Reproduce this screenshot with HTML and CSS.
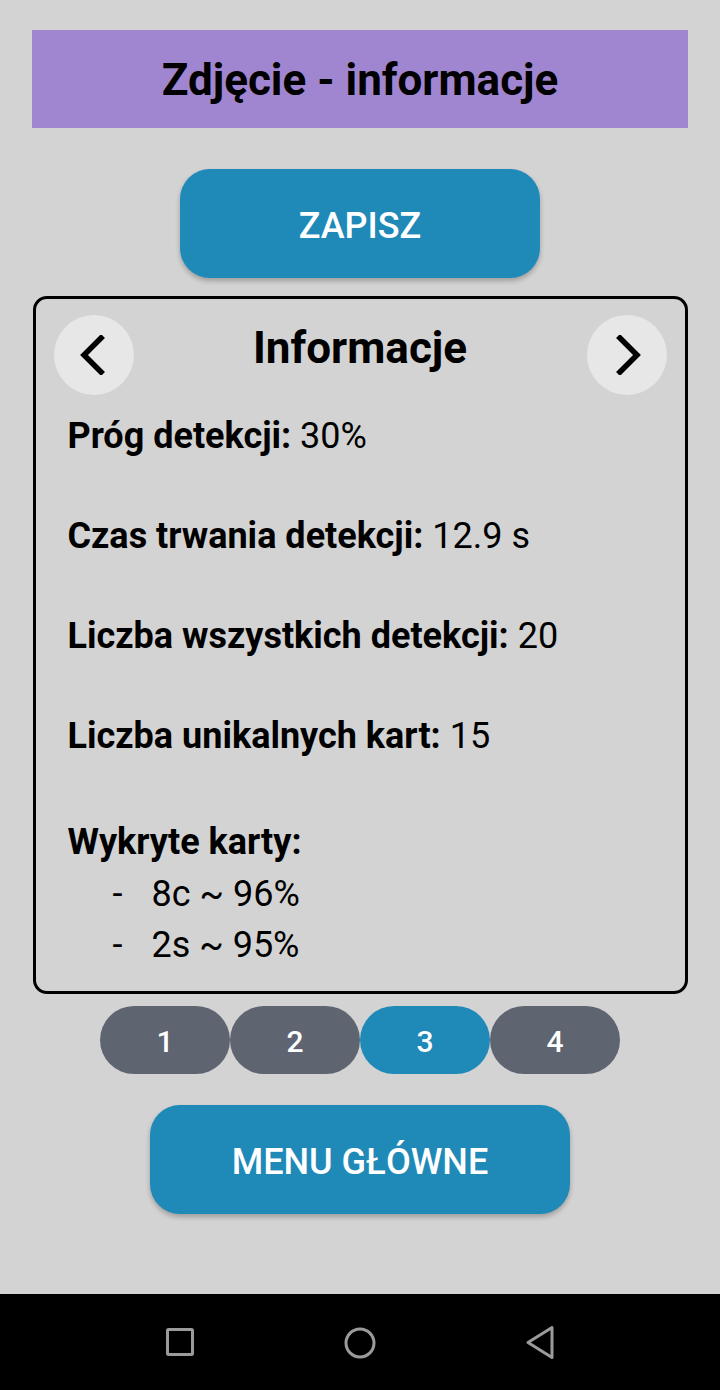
FILE: index.html
```html
<!DOCTYPE html>
<html lang="pl">
<head>
<meta charset="utf-8">
<title>Zdjęcie - informacje</title>
<link rel="stylesheet" href="styles.css">
</head>
<body>
<div class="screen">
  <main class="content">
    <header class="topbar"><h1 class="topbar-title">Zdjęcie - informacje</h1></header>
    <button class="btn btn-save">ZAPISZ</button>
    <section class="card">
      <div class="card-head">
        <button class="nav-circle" aria-label="Poprzedni">
          <svg width="40" height="40" viewBox="0 0 40 40"><path d="M29 1 L10 20 L29 39" fill="none" stroke="#000" stroke-width="5.5" stroke-linejoin="miter"/></svg>
        </button>
        <h2 class="card-title">Informacje</h2>
        <button class="nav-circle" aria-label="Następny">
          <svg width="40" height="40" viewBox="0 0 40 40"><path d="M11 1 L30 20 L11 39" fill="none" stroke="#000" stroke-width="5.5" stroke-linejoin="miter"/></svg>
        </button>
      </div>
      <div class="rows">
        <p class="row"><b>Próg detekcji:</b> 30%</p>
        <p class="row"><b>Czas trwania detekcji:</b> 12.9 s</p>
        <p class="row"><b>Liczba wszystkich detekcji:</b> 20</p>
        <p class="row"><b>Liczba unikalnych kart:</b> 15</p>
        <p class="row row-cards"><b>Wykryte karty:</b></p>
        <ul class="cards">
          <li class="card-item"><span class="dash">-</span><span>8c ~ 96%</span></li>
          <li class="card-item"><span class="dash">-</span><span>2s ~ 95%</span></li>
        </ul>
      </div>
    </section>
    <nav class="pager">
      <button class="pill">1</button>
      <button class="pill">2</button>
      <button class="pill pill-active">3</button>
      <button class="pill">4</button>
    </nav>
    <button class="btn btn-menu">MENU GŁÓWNE</button>
  </main>
  <footer class="sysbar">
    <svg class="sys-icon" width="40" height="40" viewBox="0 0 40 40"><rect x="7.5" y="7.5" width="25" height="25" rx="1" fill="none" stroke="#9b9b9b" stroke-width="3"/></svg>
    <svg class="sys-icon" width="40" height="40" viewBox="0 0 40 40"><circle cx="20" cy="21" r="14" fill="none" stroke="#9b9b9b" stroke-width="3"/></svg>
    <svg class="sys-icon" width="40" height="40" viewBox="0 0 40 40"><path d="M32 5.5 L32 35.5 L8 20.5 Z" fill="none" stroke="#9b9b9b" stroke-width="3" stroke-linejoin="round"/></svg>
  </footer>
</div>
</body>
</html>
```

FILE: styles.css
```css
* { box-sizing: border-box; }
html, body { margin: 0; padding: 0; }
body {
  background: #d3d3d3;
  font-family: Roboto, "Liberation Sans", sans-serif;
  color: #000;
}
.screen {
  height: 1390px;
  display: flex;
  flex-direction: column;
}
.content {
  flex: 1;
  display: flex;
  flex-direction: column;
  align-items: center;
  padding-top: 30px;
}
.topbar {
  width: 656px;
  height: 98px;
  background: #a086d0;
  display: flex;
  align-items: center;
  justify-content: center;
}
.topbar-title {
  margin: 0;
  font-size: 44px;
  font-weight: 700;
  padding-top: 2px;
}
.btn {
  border: none;
  background: #1f89b8;
  color: #fff;
  font-family: Roboto, "Liberation Sans", sans-serif;
  font-weight: 500;
  font-size: 36px;
  border-radius: 30px;
  box-shadow: 0 3px 5px rgba(0,0,0,0.25);
  padding: 4px 0 0 0;
}
.btn-save {
  margin-top: 41px;
  width: 360px;
  height: 109px;
}
.card {
  margin-top: 18px;
  width: 655px;
  height: 698px;
  border: 3px solid #000;
  border-radius: 14px;
  padding: 16px 18px 0 18px;
}
.card-head {
  display: flex;
  align-items: center;
  justify-content: space-between;
  height: 80px;
}
.nav-circle {
  width: 80px;
  height: 80px;
  border-radius: 50%;
  border: none;
  background: #e7e7e7;
  display: flex;
  align-items: center;
  justify-content: center;
  padding: 0;
}
.card-title {
  margin: 0;
  font-size: 44px;
  font-weight: 700;
  padding-bottom: 14px;
}
.rows {
  margin-top: 16px;
  padding-left: 14px;
}
.row {
  margin: 0 0 50px 0;
  font-size: 36px;
  line-height: 50px;
  font-weight: 400;
}
.row b { font-weight: 700; }
.row-cards { margin-bottom: 0; margin-top: 56px; }
.cards {
  list-style: none;
  margin: 2px 0 0 0;
  padding: 0 0 0 45px;
}
.card-item {
  display: flex;
  font-size: 36px;
  line-height: 51px;
}
.dash { width: 39px; }
.pager {
  margin-top: 12px;
  display: flex;
}
.pill {
  width: 130px;
  height: 68px;
  border-radius: 34px;
  border: none;
  background: #5f6471;
  color: #fff;
  font-family: Roboto, "Liberation Sans", sans-serif;
  font-weight: 500;
  font-size: 30px;
  padding: 2px 0 0 0;
}
.pill-active { background: #1f89b8; }
.btn-menu {
  margin-top: 31px;
  width: 420px;
  height: 109px;
}
.sysbar {
  height: 96px;
  background: #000;
  display: flex;
  align-items: center;
  justify-content: center;
  gap: 140px;
}
.sys-icon { display: block; }
```
